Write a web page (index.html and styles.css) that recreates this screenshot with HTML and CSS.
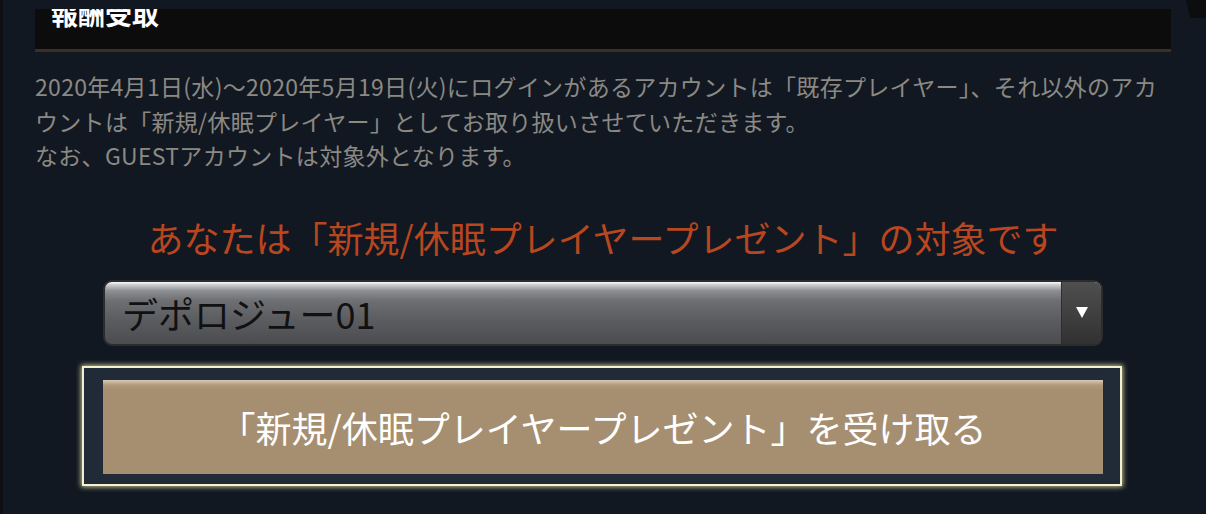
FILE: index.html
```html
<!DOCTYPE html>
<html lang="ja">
<head>
    <meta charset="UTF-8">
    <meta name="viewport" content="width=device-width, initial-scale=1.0">
    <title>報酬受取</title>
    <link rel="stylesheet" href="styles.css">
</head>
<body>
    <!-- 右上の影 -->
    <div class="corner-shade"></div>

    <div class="content">
        <!-- Title -->
        <div class="title-bar">
            <h2>報酬受取</h2>
        </div>

        <!-- 説明 -->
        <p class="notice">
            2020年4月1日(水)〜2020年5月19日(火)にログインがあるアカウントは「既存プレイヤー」、それ以外のアカウントは「新規/休眠プレイヤー」としてお取り扱いさせていただきます。<br>
            なお、GUESTアカウントは対象外となります。
        </p>

        <h3 class="target">あなたは「新規/休眠プレイヤープレゼント」の対象です</h3>

        <!-- サーバー選択 -->
        <div class="server-select">
            <span class="server-name">デポロジュー01</span>
            <span class="select-arrow"><i></i></span>
        </div>

        <!-- 受取ボタン -->
        <div class="claim-frame">
            <button class="claim-btn">「新規/休眠プレイヤープレゼント」を受け取る</button>
        </div>
    </div>
</body>
</html>
```

FILE: styles.css
```css
/* Reset */
* {
    margin: 0;
    padding: 0;
    box-sizing: border-box;
}

html, body {
    height: 100%;
}

body {
    font-family: "Noto Sans CJK JP", "Noto Sans", sans-serif;
    background-color: #121821;
    border-left: 3px solid #0d0f12;
    overflow: hidden;
    position: relative;
}

.corner-shade {
    position: absolute;
    top: 0;
    right: 0;
    width: 20px;
    height: 18px;
    background-color: #0c0d0f;
    clip-path: polygon(0 0, 100% 0, 100% 100%, 22% 100%);
}

/* Content */
.content {
    padding: 0 35px 0 32px;
}

/* Title */
.title-bar {
    margin-top: 9px;
    height: 43px;
    background-color: #0c0c0c;
    border-bottom: 3px solid #3a3021;
    overflow: hidden;
}

.title-bar h2 {
    color: #fff;
    font-size: 27px;
    font-weight: 700;
    line-height: 1;
    margin-top: -9px;
    padding-left: 16px;
}

/* Notice */
.notice {
    margin-top: 17px;
    color: #8b8984;
    font-size: 23px;
    letter-spacing: 0.3px;
    line-height: 34.5px;
}

/* Target */
.target {
    margin-top: 40px;
    color: #b8461f;
    font-size: 36px;
    font-weight: 400;
    line-height: 48px;
    text-align: center;
}

/* Select */
.server-select {
    display: flex;
    width: 1000px;
    height: 66px;
    margin: 19px 0 0 68px;
    border: 2px solid #2b2c2e;
    border-radius: 9px;
    overflow: hidden;
    background: linear-gradient(to bottom, #fdfdfd 0%, #d0d1d3 4%, #8e8f93 14%, #6e6f73 30%, #5c5d61 60%, #4b4c50 100%);
}

.server-name {
    flex: 1;
    display: flex;
    align-items: center;
    padding-left: 17px;
    color: #111;
    font-size: 36px;
}

.select-arrow {
    width: 40px;
    display: flex;
    align-items: center;
    justify-content: center;
    background: linear-gradient(to bottom, #4f4f4f, #313131);
    border-left: 1px solid #2e2e2e;
}

.select-arrow i {
    width: 0;
    height: 0;
    border-left: 6px solid transparent;
    border-right: 6px solid transparent;
    border-top: 11px solid #fff;
}

/* Claim button */
.claim-frame {
    width: 1040px;
    margin: 20px 0 0 47px;
    padding: 12px 16px 10px 19px;
    border: 2px solid #f2f2d2;
    background-color: #212a37;
    box-shadow: 0 0 5px 1px rgba(225, 225, 165, 0.85);
}

.claim-btn {
    display: block;
    width: 1000px;
    height: 94px;
    border: none;
    background: linear-gradient(to bottom, #d8cbb4 0px, #b09a7c 5px, #a68f70 10px, #a68f70 100%);
    color: #fff;
    font-family: inherit;
    font-size: 36px;
    cursor: pointer;
}
```
